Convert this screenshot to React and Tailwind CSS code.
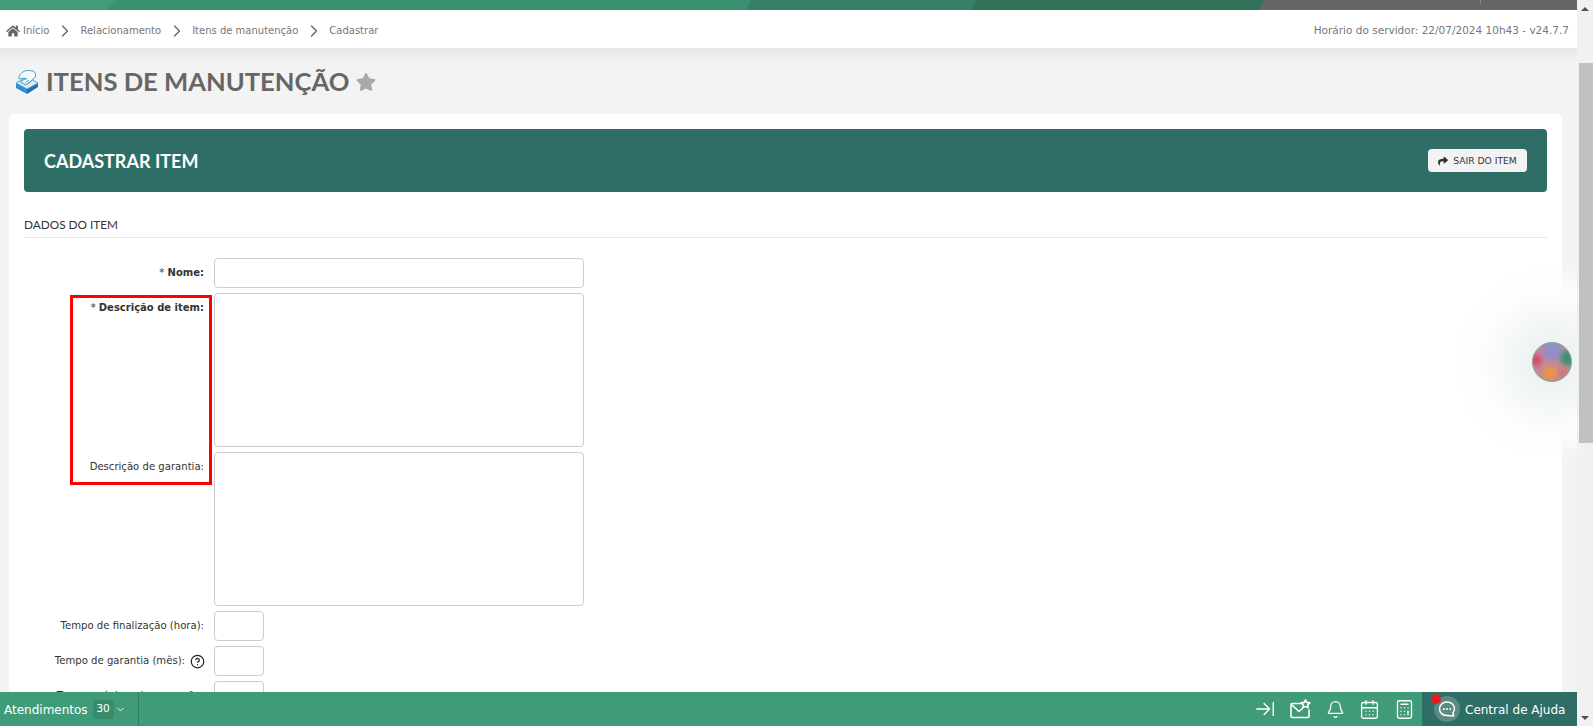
import { ArrowRightToLine, Bell, Calculator, CalendarDays, ChevronDown, ChevronRight, CircleHelp } from "lucide-react";
import { FaHome, FaShare, FaStar } from "react-icons/fa";

const CRUMBS = ["Relacionamento", "Itens de manutenção", "Cadastrar"];

const TopStripe = () => (
  <svg width="1577" height="10" className="block shrink-0">
    <rect width="1577" height="10" fill="#666666" />
    <polygon points="0,0 1265,0 1258,10 0,10" fill="#2f7359" />
    <polygon points="0,0 977,0 970,10 0,10" fill="#387f66" />
    <polygon points="0,0 752,0 745,10 0,10" fill="#3b906f" />
    <polygon points="0,0 117,0 107,10 0,10" fill="#409c79" />
    <rect x="1480" width="1" height="4" fill="#8a8a8a" />
  </svg>
);

const ProductIcon = () => (
  <svg width="24" height="26" viewBox="0 0 24 26" className="shrink-0">
    <path d="M1 14 L12 20 L12 25 L1 19 Z" fill="#2f8fd3" />
    <path d="M12 20 L23 14 L23 18 L12 25 Z" fill="#1f70b2" />
    <path d="M1 14 L8 10 L16 10 L23 14 L12 20 Z" fill="#dcebf6" stroke="#3a97d8" strokeWidth="0.8" />
    <path d="M4 10 C3 6 8 1.5 13 1.5 L18 2 C20 3 21 5 20.5 8 L15 13 L11 16 L5.5 13 L9 10.5 L12 9.5 C9 9 6 9.5 4 10 Z" fill="#f6f8fa" stroke="#4a9ccf" strokeWidth="1" strokeLinejoin="round" />
    <path d="M10 14 L14 11 M12.5 15 L16.5 12" stroke="#4a9ccf" strokeWidth="0.9" />
  </svg>
);

const MailStar = () => (
  <svg width="21" height="20" viewBox="0 0 21 20" fill="none" stroke="white" strokeWidth="1.6" strokeLinejoin="round" strokeLinecap="round" className="block">
    <path d="M11 4.5 H2 a1 1 0 0 0 -1 1 V17.5 a1 1 0 0 0 1 1 H18 a1 1 0 0 0 1 -1 V11" />
    <path d="M1.5 5.5 L9 12.5 L12.5 9.5" />
    <path d="M15.5 1 L16.8 3.4 L19.8 3.9 L17.7 5.9 L18.2 8.8 L15.5 7.4 L12.8 8.8 L13.3 5.9 L11.2 3.9 L14.2 3.4 Z" />
  </svg>
);

const HelpDots = () => (
  <svg width="26" height="26" viewBox="0 0 26 26">
    <circle cx="13" cy="13" r="13" fill="#5b8a83" />
    <path d="M13 6 C8.6 6 5.5 9 5.5 12.8 C5.5 16.6 8.6 19.6 13 19.6 L19.6 20 L19 16.6 C20 15.4 20.5 14.2 20.5 12.8 C20.5 9 17.4 6 13 6 Z" fill="none" stroke="white" strokeWidth="1.5" />
    <circle cx="9.8" cy="13" r="1" fill="white" />
    <circle cx="13" cy="13" r="1" fill="white" />
    <circle cx="16.2" cy="13" r="1" fill="white" />
  </svg>
);

const Bubble = () => (
  <svg width="40" height="40" viewBox="0 0 40 40">
    <defs>
      <clipPath id="ball">
        <circle cx="20" cy="20" r="19.5" />
      </clipPath>
      <filter id="soft">
        <feGaussianBlur stdDeviation="2.4" />
      </filter>
    </defs>
    <g clipPath="url(#ball)">
      <rect width="40" height="40" fill="#c08a98" />
      <g filter="url(#soft)">
        <circle cx="20" cy="8" r="10" fill="#8f8fc8" />
        <circle cx="36" cy="16" r="8" fill="#3c9270" />
        <circle cx="4" cy="18" r="6" fill="#d9486b" />
        <circle cx="18" cy="31" r="7" fill="#ee9340" />
        <circle cx="31" cy="31" r="5" fill="#d9707a" />
      </g>
    </g>
    <circle cx="20" cy="20" r="19.5" fill="none" stroke="#7fae8e" />
  </svg>
);

const Field = ({ label, required, bold, help, className }) => (
  <div className="flex gap-[10px]">
    <label className={`flex w-[180px] shrink-0 justify-end pt-[8px] leading-[14px] text-[#333] ${bold ? "text-[10px] font-bold" : "text-[10.1px]"}`}>
      {required && <span className="font-normal">*&nbsp;</span>}
      {label}
      {help && <CircleHelp size={15} strokeWidth={2} className="ml-[5px] mr-[-1px] shrink-0 text-[#222]" />}
    </label>
    <div className={`shrink-0 rounded-[4px] border border-[#ccc] bg-white ${className}`} />
  </div>
);

const App = () => {
  return (
    <div className="flex h-screen overflow-hidden bg-[#f3f3f3] font-['DejaVu_Sans',sans-serif]">
      <div className="relative flex min-w-0 flex-1 flex-col overflow-hidden">
        <TopStripe />

        {/* breadcrumb */}
        <div className="flex h-[38px] shrink-0 items-center justify-between bg-white pl-[6px] pr-[8px] pt-[3px] text-[#777]">
          <div className="flex items-center text-[10px]">
            <FaHome className="mr-[3px] text-[14px] text-[#666]" />
            <span>Início</span>
            {CRUMBS.map((c) => (
              <span key={c} className="flex items-center">
                <ChevronRight size={20} strokeWidth={1.6} className="mx-[5.5px] text-[#666]" />
                <span>{c}</span>
              </span>
            ))}
          </div>
          <span className="text-[10.5px]">Horário do servidor: 22/07/2024 10h43 - v24.7.7</span>
        </div>

        <div className="h-[14px] shrink-0 bg-gradient-to-b from-[#e6e6e6] to-[#f3f3f3]" />

        {/* title */}
        <div className="mb-[12px] flex h-[40px] shrink-0 items-center pl-[15px] font-['Lato',sans-serif]">
          <ProductIcon />
          <h1 className="ml-[7px] text-[25.6px] font-bold leading-none text-[#666]">ITENS DE MANUTENÇÃO</h1>
          <FaStar className="ml-[7px] text-[20px] text-[#a6aaaa]" />
        </div>

        {/* card */}
        <div className="ml-[9px] mr-[15px] min-h-0 flex-1 rounded-t-[5px] bg-white px-[15px] pt-[15px]">
          <div className="flex h-[63px] items-center justify-between rounded-[4px] bg-[#2f6e66] px-[20px]">
            <h2 className="pt-[1px] font-['Lato',sans-serif] text-[18px] font-bold text-white">CADASTRAR ITEM</h2>
            <button className="flex h-[23px] w-[99px] items-center justify-center gap-[5px] rounded-[4px] bg-[#f3f3f3] text-[9.2px] text-[#333]">
              <FaShare className="text-[10px]" />
              SAIR DO ITEM
            </button>
          </div>

          <div className="mt-[26px] border-b border-[#e8e8e8] pb-[5px] font-['Lato',sans-serif] text-[11.8px] leading-[14px] text-[#333]">
            DADOS DO ITEM
          </div>

          <form className="mt-[20px] flex flex-col gap-[5px]">
            <Field label="Nome:" required bold className="h-[30px] w-[370px]" />
            <Field label="Descrição de item:" required bold className="h-[154px] w-[370px]" />
            <Field label="Descrição de garantia:" className="h-[154px] w-[370px]" />
            <Field label="Tempo de finalização (hora):" className="h-[30px] w-[50px]" />
            <Field label="Tempo de garantia (mês):" help className="h-[30px] w-[50px]" />
            <Field label="Tempo máximo de execução:" className="h-[30px] w-[50px]" />
          </form>
        </div>

        {/* highlight */}
        <div className="absolute left-[70px] top-[295px] h-[190px] w-[142px] border-[3px] border-[#fe0000]" />

        {/* floating widget */}
        <div className="absolute left-[1452px] top-[262px] h-[200px] w-[200px] rounded-full bg-[radial-gradient(circle,#e8efed_0%,#f2f6f5_25%,#fcfdfd_50%,transparent_70%)]" />
        <div className="absolute left-[1532px] top-[342px]">
          <Bubble />
        </div>

        {/* bottom bar */}
        <div className="absolute inset-x-0 bottom-0 flex h-[34px] items-center justify-between bg-[#409c78] text-white">
          <div className="flex h-full items-center border-r border-[#2f7d60] pl-[4px] pr-[12px]">
            <span className="pt-[1px] text-[12px]">Atendimentos</span>
            <span className="ml-[5px] flex h-[19px] w-[21px] items-center justify-center rounded-[3px] bg-[#388c6c] text-[10.5px]">30</span>
            <ChevronDown size={11} strokeWidth={2} className="ml-[1px]" />
          </div>
          <div className="flex h-full items-center">
            <ArrowRightToLine size={22} strokeWidth={1.5} />
            <span className="ml-[14px]">
              <MailStar />
            </span>
            <Bell size={19} strokeWidth={1.6} className="ml-[15px]" />
            <CalendarDays size={21} strokeWidth={1.5} className="ml-[14px]" />
            <Calculator size={21} strokeWidth={1.5} className="ml-[14px]" />
            <div className="relative ml-[7px] flex h-full w-[155px] items-center bg-[#2f6e66] pl-[12px]">
              <span className="absolute left-[9px] top-[2px] h-[10px] w-[10px] rounded-full bg-[#e02020]" />
              <HelpDots />
              <span className="ml-[5px] pt-[1px] text-[12px]">Central de Ajuda</span>
            </div>
          </div>
        </div>
      </div>

      {/* scrollbar */}
      <div className="flex w-[16px] shrink-0 flex-col items-center justify-between bg-[#f1f1f1]">
        <div className="flex h-[17px] w-full items-center justify-center">
          <div className="h-0 w-0 border-x-[4px] border-b-[4px] border-x-transparent border-b-[#505050]" />
        </div>
        <div className="mb-auto mt-[46px] h-[380px] w-[14px] self-end bg-[#c1c1c1]" />
        <div className="flex h-[17px] w-full items-center justify-center">
          <div className="h-0 w-0 border-x-[4px] border-t-[4px] border-x-transparent border-t-[#505050]" />
        </div>
      </div>
    </div>
  );
};

export default App;
